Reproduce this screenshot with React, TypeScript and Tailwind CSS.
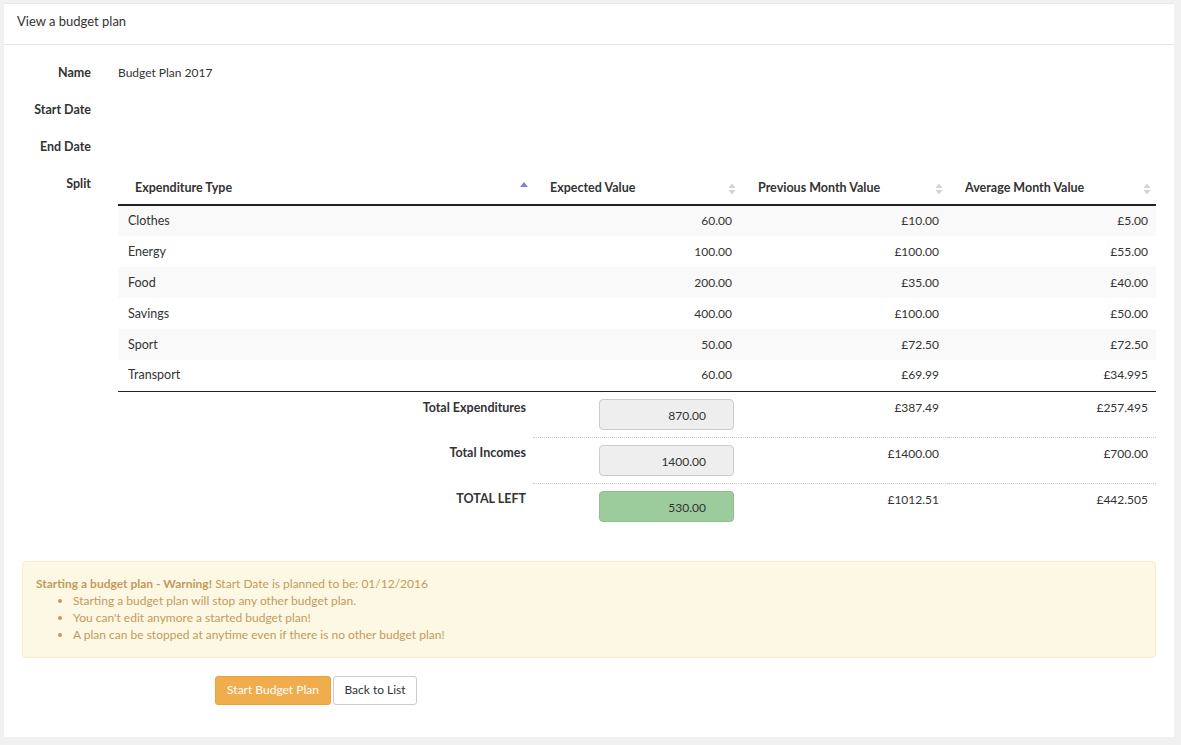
import React from 'react';

type Row = { type: string; expected: string; previous: string; average: string };

const rows: Row[] = [
  { type: 'Clothes', expected: '60.00', previous: '£10.00', average: '£5.00' },
  { type: 'Energy', expected: '100.00', previous: '£100.00', average: '£55.00' },
  { type: 'Food', expected: '200.00', previous: '£35.00', average: '£40.00' },
  { type: 'Savings', expected: '400.00', previous: '£100.00', average: '£50.00' },
  { type: 'Sport', expected: '50.00', previous: '£72.50', average: '£72.50' },
  { type: 'Transport', expected: '60.00', previous: '£69.99', average: '£34.995' },
];

const totals = [
  { label: 'Total Expenditures', value: '870.00', previous: '£387.49', average: '£257.495', green: false },
  { label: 'Total Incomes', value: '1400.00', previous: '£1400.00', average: '£700.00', green: false },
  { label: 'TOTAL LEFT', value: '530.00', previous: '£1012.51', average: '£442.505', green: true },
];

const SortIcon = ({ active }: { active?: boolean }) =>
  active ? (
    <svg width="8" height="12" viewBox="0 0 8 12" className="absolute right-[5px] top-[8px]">
      <path d="M0 6 L4 1 L8 6 Z" fill="#7f7fdd" />
    </svg>
  ) : (
    <svg width="8" height="14" viewBox="0 0 8 14" className="absolute right-[5px] top-[9px]">
      <path d="M0.5 6 L4 1.5 L7.5 6 Z" fill="#d3d3d3" />
      <path d="M0.5 8 L4 12.5 L7.5 8 Z" fill="#d3d3d3" />
    </svg>
  );

const FieldRow = ({ label, children }: { label: string; children?: React.ReactNode }) => (
  <div className="flex mb-[19px] leading-[18px]">
    <div className="w-[87px] shrink-0 text-right font-bold text-[12.5px] text-[#333]">{label}</div>
    <div className="pl-[27px] text-[12px] text-[#333]">{children}</div>
  </div>
);

export default function App() {
  return (
    <div
      className="min-h-screen bg-[#f1f1f1] pt-[3px] pl-[4px] pr-[7px] pb-[8px] text-[#333]"
      style={{ fontFamily: 'Lato, "Open Sans", sans-serif' }}
    >
      <div className="bg-white border-t border-[#e6e9ee]">
        <div className="h-[41px] border-b border-[#e5e5e5] px-[13px] pt-[8px] leading-[18px] text-[13px]">
          View a budget plan
        </div>

        <div className="pt-[19px] pb-[32px]">
          <FieldRow label="Name">Budget Plan 2017</FieldRow>
          <FieldRow label="Start Date" />
          <FieldRow label="End Date" />

          <div className="flex leading-[18px]">
            <div className="w-[87px] shrink-0 text-right font-bold text-[12.5px]">Split</div>
            <div className="pl-[27px] mt-[-2px]">
              <table className="table-fixed border-collapse w-[1038px] text-[12px]">
                <colgroup>
                  <col className="w-[415px]" />
                  <col className="w-[208px]" />
                  <col className="w-[207px]" />
                  <col className="w-[208px]" />
                </colgroup>
                <thead>
                  <tr className="h-[32px] border-b-2 border-[#222]">
                    {['Expenditure Type', 'Expected Value', 'Previous Month Value', 'Average Month Value'].map((h, i) => (
                      <th key={h} className="relative text-left font-bold text-[12.5px] pl-[17px] pb-[2px]">
                        {h}
                        <SortIcon active={i === 0} />
                      </th>
                    ))}
                  </tr>
                </thead>
                <tbody className="border-b border-[#222]">
                  {rows.map((r, i) => (
                    <tr key={r.type} className={`h-[31px] ${i % 2 === 0 ? 'bg-[#f9f9f9]' : 'bg-white'}`}>
                      <td className="pl-[10px] text-[12.5px]">{r.type}</td>
                      <td className="text-right pr-[9px]">{r.expected}</td>
                      <td className="text-right pr-[9px]">{r.previous}</td>
                      <td className="text-right pr-[8px]">{r.average}</td>
                    </tr>
                  ))}
                </tbody>
                <tbody>
                  {totals.map((t, i) => (
                    <tr key={t.label} className="align-top">
                      <td className="text-right font-bold text-[12.5px] pr-[7px] pt-[7px]">{t.label}</td>
                      <td
                        className={`pt-[7px] pb-[7px] ${i < 2 ? 'border-b border-dotted border-[#c8c8c8]' : ''}`}
                      >
                        <div
                          className={`ml-[66px] w-[135px] h-[31px] rounded-[4px] border text-right pr-[27px] pt-[7px] text-[12px] leading-[18px] ${
                            t.green ? 'bg-[#9ccc9c] border-[#8fbf8f]' : 'bg-[#eeeeee] border-[#cccccc]'
                          }`}
                        >
                          {t.value}
                        </div>
                      </td>
                      <td
                        className={`text-right pr-[9px] pt-[7px] ${i < 2 ? 'border-b border-dotted border-[#c8c8c8]' : ''}`}
                      >
                        {t.previous}
                      </td>
                      <td
                        className={`text-right pr-[8px] pt-[7px] ${i < 2 ? 'border-b border-dotted border-[#c8c8c8]' : ''}`}
                      >
                        {t.average}
                      </td>
                    </tr>
                  ))}
                </tbody>
              </table>
            </div>
          </div>
        </div>

        <div className="mx-[18px] rounded-[4px] border border-[#faebcc] bg-[#fcf8e3] text-[#c49a5c] pl-[13px] pt-[13px] pb-[14px] text-[12px] leading-[17px]">
          <div>
            <span className="font-bold">Starting a budget plan - Warning!</span> Start Date is planned to be: 01/12/2016
          </div>
          <ul className="list-disc pl-[37px]">
            <li>Starting a budget plan will stop any other budget plan.</li>
            <li>You can't edit anymore a started budget plan!</li>
            <li>A plan can be stopped at anytime even if there is no other budget plan!</li>
          </ul>
        </div>

        <div className="flex gap-[2px] pl-[211px] pt-[18px] pb-[32px]">
          <button className="h-[29px] w-[116px] rounded-[3px] bg-[#f0ad4e] border border-[#eea236] text-white text-[12px]">
            Start Budget Plan
          </button>
          <button className="h-[29px] w-[84px] rounded-[3px] bg-white border border-[#cccccc] text-[#333] text-[12px]">
            Back to List
          </button>
        </div>
      </div>
    </div>
  );
}
